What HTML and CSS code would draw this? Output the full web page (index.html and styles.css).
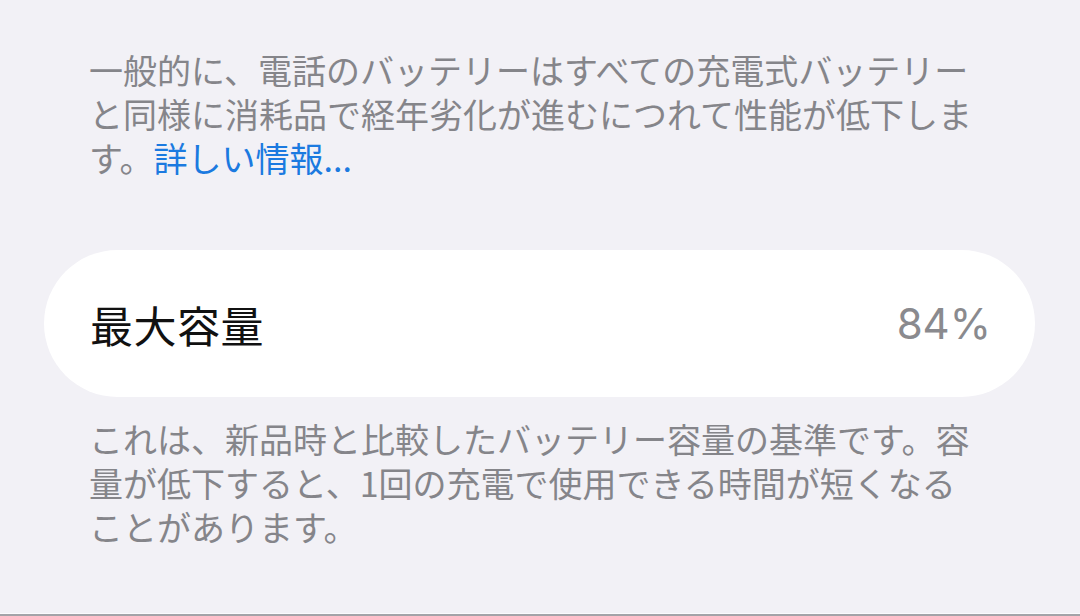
FILE: index.html
```html
<!DOCTYPE html>
<html lang="ja">
    <head>
        <meta charset="UTF-8">
        <title>バッテリーの状態</title>
        <link rel="stylesheet" href="styles.css">
    </head>
    <body>
        <div class="screen">
            <p class="note note-top">一般的に、電話のバッテリーはすべての充電式バッテリーと同様に消耗品で経年劣化が進むにつれて性能が低下します。<a class="more" href="#">詳しい情報...</a></p>
            <div class="cell">
                <span class="cell-label">最大容量</span>
                <span class="cell-value">84%</span>
            </div>
            <p class="note note-bottom">これは、新品時と比較したバッテリー容量の基準です。容量が低下すると、1回の充電で使用できる時間が短くなることがあります。</p>
            <div class="edge"></div>
        </div>
    </body>
</html>
```

FILE: styles.css
```css
* { box-sizing: border-box; }

html, body {
    margin: 0; padding: 0;
    width: 100%; height: 100%;
    background: #f2f1f6;
    font-family: "Noto Sans CJK JP", "Noto Sans", sans-serif; }

.screen {
    display: flex;
    flex-direction: column;
    height: 100%; }

.note {
    margin: 0;
    padding: 0 0 0 89px;
    width: 979px;
    font-size: 34px;
    line-height: 44px;
    color: #85858a;
    line-break: strict; }
.note-top { padding-top: 48px; }
.note-bottom { padding-top: 20px; }

.more {
    color: #1b7ae0;
    text-decoration: none; }

.cell {
    display: flex;
    align-items: center;
    justify-content: space-between;
    margin: 70px 45px 0 44px;
    height: 147px;
    padding: 0 44px 0 46px;
    background: #fff;
    border-radius: 74px; }
.cell-label {
    font-size: 43px;
    color: #111;
    letter-spacing: 0.5px; }
.cell-value {
    font-family: "Inter", "Liberation Sans", sans-serif;
    font-size: 42px;
    color: #8a8a8e; }

.edge {
    margin-top: auto;
    height: 3px;
    border-top: 1px solid #fbfbfd;
    background: #a3a3a8; }
```
